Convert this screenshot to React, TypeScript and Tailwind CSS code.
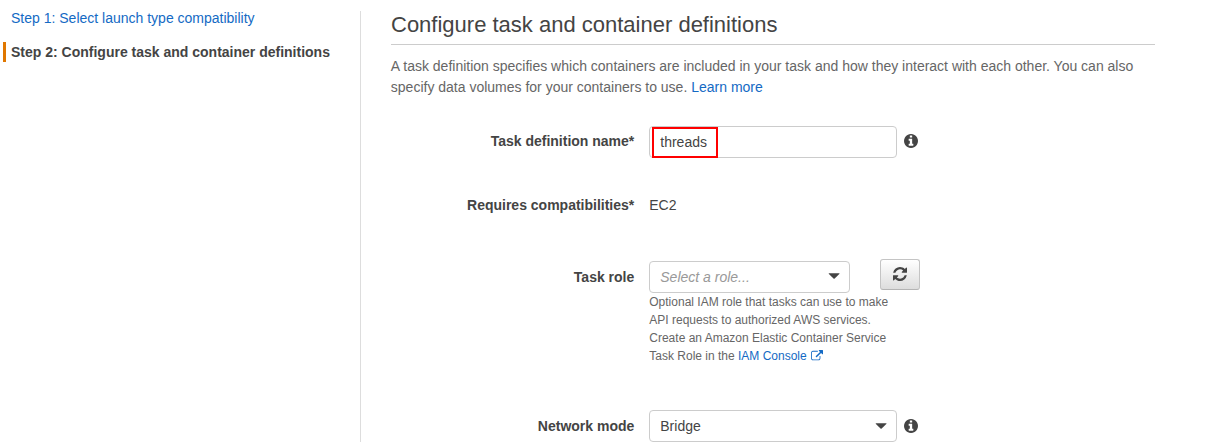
import React from "react";

const INFO =
  "M1152 1376v-160q0-14-9-23t-23-9h-96v-512q0-14-9-23t-23-9h-320q-14 0-23 9t-9 23v160q0 14 9 23t23 9h96v320h-96q-14 0-23 9t-9 23v160q0 14 9 23t23 9h448q14 0 23-9t9-23zm-128-896v-160q0-14-9-23t-23-9h-192q-14 0-23 9t-9 23v160q0 14 9 23t23 9h192q14 0 23-9t9-23zm640 416q0 209-103 385.5t-279.5 279.5-385.5 103-385.5-103-279.5-279.5-103-385.5 103-385.5 279.5-279.5 385.5-103 385.5 103 279.5 279.5 103 385.5z";
const REFRESH =
  "M1639 1056q0 5-1 7-64 268-268 434.5t-478 166.5q-146 0-282.5-55t-243.5-157l-129 129q-19 19-45 19t-45-19-19-45v-448q0-26 19-45t45-19h448q26 0 45 19t19 45-19 45l-137 137q71 66 161 102t187 36q134 0 250-65t186-179q11-17 53-117 8-23 30-23h192q13 0 22.5 9.5t9.5 22.5zm25-800v448q0 26-19 45t-45 19h-448q-26 0-45-19t-19-45 19-45l138-138q-148-137-349-137-134 0-250 65t-186 179q-11 17-53 117-8 23-30 23h-199q-13 0-22.5-9.5t-9.5-22.5v-7q65-268 270-434.5t480-166.5q146 0 284 55.5t245 156.5l130-129q19-19 45-19t45 19 19 45z";
const EXTERNAL =
  "M1408 928v320q0 119-84.5 203.5t-203.5 84.5h-832q-119 0-203.5-84.5t-84.5-203.5v-832q0-119 84.5-203.5t203.5-84.5h704q14 0 23 9t9 23v64q0 14-9 23t-23 9h-704q-66 0-113 47t-47 113v832q0 66 47 113t113 47h832q66 0 113-47t47-113v-320q0-14 9-23t23-9h64q14 0 23 9t9 23zm384-864v512q0 26-19 45t-45 19-45-19l-176-176-652 652q-10 10-23 10t-23-10l-114-114q-10-10-10-23t10-23l652-652-176-176q-19-19-19-45t19-45 45-19h512q26 0 45 19t19 45z";

const Info = () => (
  <svg className="ml-[7px] size-[14px] shrink-0" viewBox="128 128 1536 1536" fill="#444">
    <path d={INFO} />
  </svg>
);

const Caret = () => (
  <svg className="h-[6px] w-[12px]" viewBox="0 0 12 6" fill="#444">
    <path d="M1.2 0.3h9.8q0.9 0 0.3 0.8L6.7 5.6q-0.6 0.5-1.2 0L0.9 1.1q-0.6-0.8 0.3-0.8z" />
  </svg>
);

function Label({ children }: { children: React.ReactNode }) {
  return (
    <div className="mr-[14.7px] w-[243.3px] shrink-0 text-right leading-5 font-bold">{children}</div>
  );
}

export default function App() {
  return (
    <div className="flex h-[442px] overflow-hidden bg-white font-['Liberation_Sans',Arial,sans-serif] text-[14px] text-[#444]">
      <nav className="mt-[11px] w-[361px] shrink-0 border-r border-[#ddd] pl-[3px]">
        <a className="mt-[-3px] block pl-2 leading-5 text-[#146ac4]">Step 1: Select launch type compatibility</a>
        <div className="mt-[14px] border-l-[3px] border-[#e07700] pl-[5px] leading-5 font-bold">
          Step 2: Configure task and container definitions
        </div>
      </nav>
      <main className="ml-[30px] w-[764px] shrink-0">
        <h1 className="h-[45px] border-b border-[#ccc] pt-[10px] text-[22px] leading-[30px]">
          Configure task and container definitions
        </h1>
        <p className="mt-[11px] -ml-[0.2px] leading-[21px] text-[#666]">
          A task definition specifies which containers are included in your task and how they interact with each
          other. You can also specify data volumes for your containers to use.{" "}
          <a className="text-[#146ac4]">Learn more</a>
        </p>

        <div className="mt-7 flex h-8 items-center">
          <Label>
            <div className="pb-[2px]">Task definition name*</div>
          </Label>
          <div className="flex h-8 w-[248px] rounded-[4px] border border-[#ccc] pl-[2px]">
            <div className="h-[31px] w-[66px] border-2 border-[#f00] pt-[1px] pl-[6.3px] leading-6">threads</div>
          </div>
          <div className="pb-[2px]">
            <Info />
          </div>
        </div>

        <div className="mt-[37px] flex leading-5">
          <Label>Requires compatibilities*</Label>
          <div className="pl-[0.3px]">EC2</div>
        </div>

        <div className="mt-11 flex">
          <div className="pt-2">
            <Label>Task role</Label>
          </div>
          <div className="w-[271px] pt-[2px]">
            <div className="flex">
              <div className="flex h-8 w-[201px] items-center justify-between rounded-[4px] border border-[#ccc] pr-[9px] pl-[10.3px]">
                <span className="text-[#999] italic">Select a role...</span>
                <div className="pb-[2px]">
                  <Caret />
                </div>
              </div>
              <button className="-mt-[2px] ml-[30px] flex h-[31px] w-[40px] items-center justify-center rounded-[3px] border border-[#c4c4c4] border-b-[#b4b4b4] bg-linear-to-b from-white to-[#ddd] pb-[2px]">
                <svg className="size-[14px]" viewBox="128 128 1536 1536" fill="#444">
                  <path d={REFRESH} />
                </svg>
              </button>
            </div>
            <p className="w-[248px] pl-[0.3px] text-[12px] leading-[18px] text-[#666]">
              Optional IAM role that tasks can use to make
              <br />
              API requests to authorized AWS services.
              <br />
              Create an Amazon Elastic Container Service
              <br />
              Task Role in the{" "}
              <a className="text-[#146ac4]">
                IAM Console
                <svg className="ml-1 inline h-[10.3px] w-[12px] align-[-0.5px]" viewBox="0 0 1792 1536" fill="#146ac4">
                  <path d={EXTERNAL} />
                </svg>
              </a>
            </p>
          </div>
        </div>

        <div className="mt-[45px] flex h-8 items-center">
          <Label>Network mode</Label>
          <div className="flex h-8 w-[248px] items-center justify-between rounded-[4px] border border-[#ccc] pr-[9px] pl-[10.3px]">
            <span>Bridge</span>
            <Caret />
          </div>
          <Info />
        </div>
      </main>
    </div>
  );
}
